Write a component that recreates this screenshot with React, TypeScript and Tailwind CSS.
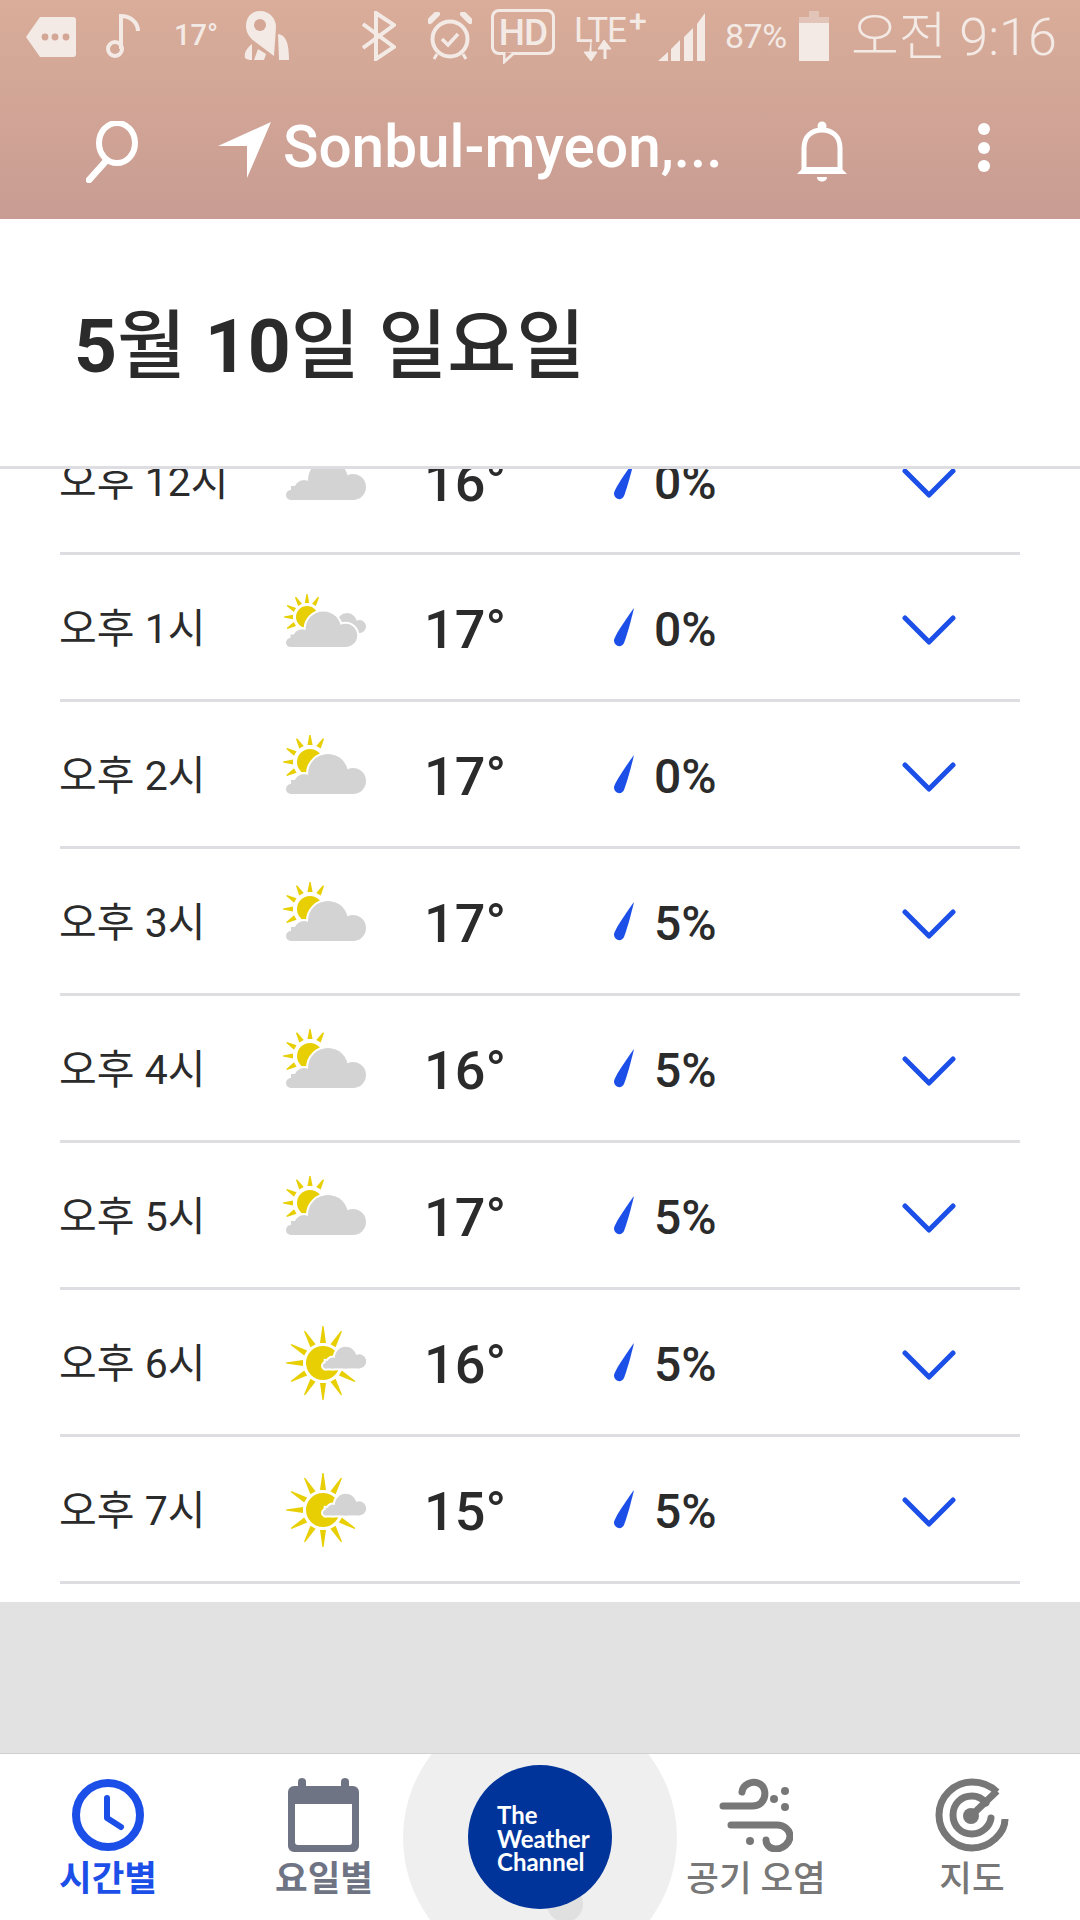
const FONT = "[font-family:Roboto,'Noto_Sans_CJK_KR',sans-serif]"

const rows = [
  { time: "12", icon: "cloud", temp: 16, rain: 0 },
  { time: "1", icon: "few", temp: 17, rain: 0 },
  { time: "2", icon: "partly", temp: 17, rain: 0 },
  { time: "3", icon: "partly", temp: 17, rain: 5 },
  { time: "4", icon: "partly", temp: 16, rain: 5 },
  { time: "5", icon: "partly", temp: 17, rain: 5 },
  { time: "6", icon: "sun", temp: 16, rain: 5 },
  { time: "7", icon: "sun", temp: 15, rain: 5 },
]

function Cloud({ x = 0, y = 0, s = 1, halo = false }: { x?: number; y?: number; s?: number; halo?: boolean }) {
  const shape = (
    <>
      <circle cx="42" cy="40" r="20" />
      <circle cx="67" cy="47" r="13" />
      <circle cx="18" cy="50" r="10" />
      <circle cx="5" cy="55" r="5" />
      <rect x="5" y="46" width="62" height="14" />
    </>
  )
  return (
    <g transform={`translate(${x} ${y}) scale(${s})`}>
      {halo && (
        <g fill="#fff" stroke="#fff" strokeWidth={4 / s}>
          {shape}
        </g>
      )}
      <g fill="#d3d3d3">{shape}</g>
    </g>
  )
}

function Rays({ cx, cy, r1, r2, w, angles }: { cx: number; cy: number; r1: number; r2: number; w: number; angles: number[] }) {
  return (
    <g fill="#e8cf04">
      {angles.map((a) => (
        <polygon
          key={a}
          transform={`translate(${cx} ${cy}) rotate(${a})`}
          points={`${r1},${-w} ${r2},-0.6 ${r2},0.6 ${r1},${w}`}
        />
      ))}
    </g>
  )
}

function WeatherIcon({ type }: { type: string }) {
  return (
    <svg width="80" height="80" viewBox="0 0 80 80" className="shrink-0 overflow-visible">
      {type === "cloud" && <Cloud />}
      {type === "partly" && (
        <>
          <circle cx="24" cy="28" r="13" fill="#e8cf04" />
          <Rays cx={24} cy={28} r1={17} r2={27} w={2.6} angles={[180, 210, 240, 270, 300, 150]} />
          <Cloud halo />
        </>
      )}
      {type === "few" && (
        <>
          <circle cx="21" cy="30" r="11" fill="#e8cf04" />
          <Rays cx={21} cy={30} r1={14} r2={23} w={2.2} angles={[180, 210, 240, 270, 300, 150]} />
          <Cloud x={40} y={16} s={0.5} />
          <Cloud y={6.6} s={0.89} halo />
        </>
      )}
      {type === "sun" && (
        <>
          <circle cx="37" cy="41" r="17" fill="#e8cf04" />
          <Rays cx={37} cy={41} r1={20} r2={37} w={3} angles={[60, 90, 120, 150, 180, 210, 240, 270, 300, 30]} />
          <Cloud x={37} y={14} s={0.54} halo />
        </>
      )}
    </svg>
  )
}

function Row({ time, icon, temp, rain }: { time: string; icon: string; temp: number; rain: number }) {
  return (
    <div className="h-[147px] shrink-0 flex items-center border-b-[3px] border-[#dedee2]">
      <div className="w-[226px] pt-[5px] -ml-[1px] mr-[1px] text-[41px] text-[#2b2b2b] whitespace-nowrap">오후 {time}시</div>
      <WeatherIcon type={icon} />
      <div className="w-[247px] pl-[58px] pr-[1px] pt-[5px] text-[54px] font-medium text-[#2b2b2b]">{temp}°</div>
      <svg width="22" height="40" viewBox="0 0 22 40" className="shrink-0">
        <path d="M21 1 C18 14 14 28 11 36 C9 41 1 40 1 33 C2 28 13 12 21 1 Z" fill="#1c4fe8" />
      </svg>
      <div className="w-[267px] pl-[19px] pt-[5px] text-[48px] font-medium text-[#2b2b2b]">{rain}%</div>
      <svg width="54" height="30" viewBox="0 0 54 30" className="shrink-0 mt-[6px]">
        <path d="M3 3 L27 27 L51 3" fill="none" stroke="#1c4fe8" strokeWidth="5" strokeLinecap="round" strokeLinejoin="round" />
      </svg>
    </div>
  )
}

function StatusBar() {
  const c = "#f3e9e5"
  return (
    <div className="h-[72px] flex items-center pl-[26px] text-[#f3e9e5]">
      <svg width="50" height="41" viewBox="0 0 50 41" className="shrink-0">
        <path d="M14 1 H47 a3 3 0 0 1 3 3 V38 a3 3 0 0 1 -3 3 H14 L0 21 Z" fill={c} />
        <circle cx="19" cy="21" r="3.4" fill="#d3a695" />
        <circle cx="29" cy="21" r="3.4" fill="#d3a695" />
        <circle cx="40" cy="21" r="3.4" fill="#d3a695" />
      </svg>
      <svg width="35" height="45" viewBox="0 0 35 45" className="ml-[29px] shrink-0">
        <circle cx="10" cy="35" r="7" fill="none" stroke={c} strokeWidth="4" />
        <path d="M16 35 V2 C26 2 33 9 33 17" fill="none" stroke={c} strokeWidth="4" />
      </svg>
      <div className="ml-[34px] w-[70px] text-[29px] font-medium">17°</div>
      <svg width="46" height="50" viewBox="0 0 46 50" className="shrink-0">
        <path d="M16 0 C26 0 32 8 32 16 L30 45 L10 30 C4 25 2 20 2 15 C2 6 8 0 16 0 Z" fill={c} />
        <circle cx="16" cy="14" r="6" fill="#d3a695" />
        <path d="M34 23 C42 24 45 32 45 49 H35 Z M8 33 C2 38 0 42 1 47 C4 49 6 49 8 49 Z M14 38 L10 49 H20 L22 43 Z" fill={c} />
      </svg>
      <svg width="34" height="50" viewBox="0 0 34 50" className="ml-[72px] shrink-0">
        <path d="M1 13 L32 36 L14 48 V2 L32 14 L1 37" fill="none" stroke={c} strokeWidth="4" />
      </svg>
      <svg width="44" height="49" viewBox="0 0 44 49" className="ml-[32px] shrink-0">
        <circle cx="22" cy="27" r="17.5" fill="none" stroke={c} strokeWidth="4" />
        <path d="M14 27 L20 33 L30 22" fill="none" stroke={c} strokeWidth="3.5" />
        <path d="M2 9 L9 2 M42 9 L35 2" stroke={c} strokeWidth="6" strokeLinecap="round" />
        <path d="M9 42 L6 47 M35 42 L38 47" stroke={c} strokeWidth="3" />
      </svg>
      <div className="relative ml-[19px] w-[64px] h-[46px] border-[3px] border-[#f3e9e5] rounded-[8px] flex items-center justify-center text-[37px] tracking-[-1px] leading-none font-medium mb-[8px]">
        HD
        <svg width="16" height="12" viewBox="0 0 16 12" className="absolute left-[9px] -bottom-[12px]">
          <path d="M1 0 V10 L11 1" fill="#d4a796" stroke={c} strokeWidth="3" />
        </svg>
      </div>
      <div className="relative ml-[19px] w-[72px] h-[53px] text-[35px] tracking-[-1px] leading-none font-normal">
        <span className="absolute left-0 top-[3px]">LTE</span>
        <span className="absolute left-[55px] -top-[5px] text-[32px] font-medium">+</span>
        <svg width="28" height="24" viewBox="0 0 28 24" className="absolute left-[10px] top-[30px]">
          <path d="M7 0 V12 H13 L7 21 L0 12 H5 M20 19 V9 H14 L20 0 L27 9 H22 V19" fill={c} stroke={c} strokeWidth="1" />
        </svg>
      </div>
      <svg width="48" height="49" viewBox="0 0 48 49" className="ml-[12px] shrink-0">
        <path d="M0 49 L10 40 V49 Z M13 37 L22 28 V49 H13 Z M26 25 L35 16 V49 H26 Z M39 12 L47 1 V49 H39 Z" fill={c} />
      </svg>
      <div className="ml-[19px] w-[74px] text-[34px] tracking-[-0.5px] whitespace-nowrap">87%</div>
      <svg width="30" height="50" viewBox="0 0 30 50" className="shrink-0">
        <path d="M10 0 H20 V6 H30 V12 H0 V6 H10 Z" fill={c} opacity="0.4" />
        <rect y="12" width="30" height="38" fill={c} />
      </svg>
      <div className="ml-[22px] pt-[4px] text-[52px] font-light whitespace-nowrap">오전 9:16</div>
    </div>
  )
}

function TopBar() {
  return (
    <div className="h-[147px] flex items-start pt-[49px] pl-[86px] text-white">
      <svg width="53" height="62" viewBox="0 0 53 62" className="shrink-0">
        <ellipse cx="31" cy="22" rx="18" ry="20" fill="none" stroke="#fff" strokeWidth="6" />
        <path d="M20 40 L3 59" stroke="#fff" strokeWidth="6.5" strokeLinecap="round" />
      </svg>
      <svg width="53" height="56" viewBox="0 0 53 56" className="ml-[79px] mt-[1px] shrink-0">
        <path d="M53 0 L0 24 H29 V56 Z" fill="#fff" />
      </svg>
      <div className="ml-[12px] w-[514px] -mt-[5px] text-[58.5px] leading-[62px] font-medium whitespace-nowrap">Sonbul-myeon,...</div>
      <svg width="50" height="62" viewBox="0 0 50 62" className="shrink-0">
        <path d="M7 50 V27 C7 15 15 9 25 9 C35 9 43 15 43 27 V50" fill="none" stroke="#fff" strokeWidth="5" />
        <circle cx="25" cy="5" r="4.5" fill="#fff" />
        <path d="M0 53 L7 46 H43 L50 53 Z" fill="#fff" />
        <path d="M20 56 H30 C30 62 20 62 20 56 Z" fill="#fff" />
      </svg>
      <div className="ml-[131px] mt-[2px] flex flex-col gap-[6.5px]">
        <div className="size-[12px] rounded-full bg-white" />
        <div className="size-[12px] rounded-full bg-white" />
        <div className="size-[12px] rounded-full bg-white" />
      </div>
    </div>
  )
}

function BottomNav() {
  return (
    <div className="relative h-[167px] bg-white border-t border-[#d0d0d0] overflow-hidden">
      {/* logo backdrop */}
      <div className="absolute left-[403px] -top-[53px] size-[274px] rounded-full bg-[#efefef]" />
      <div className="absolute left-[547px] top-[132px] size-[36px] rounded-full bg-[#e0e0e0]" />
      <div className="absolute left-[468px] top-[11px] size-[144px] rounded-full bg-[#00349b] pl-[29px] pt-[38px] text-[24px] leading-[23.5px] font-bold text-white [font-family:Lato,sans-serif]">
        The
        <br />
        Weather
        <br />
        Channel
      </div>

      <div className="relative grid grid-cols-5 h-full">
        <div className="flex flex-col items-center pt-[24px]">
          <svg width="74" height="74" viewBox="0 0 74 74">
            <circle cx="37" cy="37" r="32" fill="none" stroke="#1c4fe8" strokeWidth="8" />
            <path d="M36 20 V40 L50 49" fill="none" stroke="#1c4fe8" strokeWidth="6" strokeLinecap="round" strokeLinejoin="round" />
          </svg>
          <span className="mt-[5px] text-[35.5px] leading-[44px] font-bold text-[#1c4fe8]">시간별</span>
        </div>
        <div className="flex flex-col items-center pt-[24px]">
          <svg width="74" height="74" viewBox="0 0 74 74" fill="#6f7484">
            <rect x="11" y="0" width="8" height="16" rx="4" />
            <rect x="54" y="0" width="8" height="16" rx="4" />
            <path d="M7 8 H66 a6 6 0 0 1 6 6 V68 a6 6 0 0 1 -6 6 H7 a6 6 0 0 1 -6 -6 V14 a6 6 0 0 1 6 -6 Z M8 26 V64 a3 3 0 0 0 3 3 H62 a3 3 0 0 0 3 -3 V26 Z" fillRule="evenodd" />
          </svg>
          <span className="mt-[5px] text-[35.5px] leading-[44px] font-bold text-[#6f7484]">요일별</span>
        </div>
        <div />
        <div className="flex flex-col items-center pt-[24px]">
          <svg width="74" height="74" viewBox="0 0 74 74" fill="none" stroke="#777" strokeWidth="7" strokeLinecap="round">
            <path d="M23 14 C24 6 33 3 39 5 C47 8 48 19 42 25 C40 27 37 28 33 28 H4" />
            <path d="M12 47 H58 C65 47 71 52 71 58 C71 65 64 71 57 71 C51 71 47 67 47 62" />
            <g fill="#777" stroke="none">
              <circle cx="66" cy="13" r="4" />
              <circle cx="55" cy="21" r="4" />
              <circle cx="66" cy="29" r="4" />
              <circle cx="31" cy="63" r="4" />
            </g>
          </svg>
          <span className="mt-[5px] text-[35.5px] leading-[44px] font-medium text-[#777] whitespace-nowrap">공기 오염</span>
        </div>
        <div className="flex flex-col items-center pt-[24px]">
          <svg width="74" height="74" viewBox="0 0 74 74" fill="none" stroke="#777" strokeWidth="7" strokeLinecap="round">
            <path d="M62 14 C55 7 46 4 37 4 C19 4 4 19 4 37 C4 55 19 70 37 70 C55 70 70 55 70 41" strokeLinecap="butt" />
            <path d="M51 25 C47 20 42 18 37 18 C26 18 18 26 18 37 C18 48 26 56 37 56 C47 56 55 48 56 40" strokeLinecap="round" />
            <path d="M38 36 L62 13" strokeLinecap="butt" />
            <circle cx="36" cy="38" r="8" fill="#777" stroke="none" />
          </svg>
          <span className="mt-[5px] text-[35.5px] leading-[44px] font-medium text-[#777]">지도</span>
        </div>
      </div>
    </div>
  )
}

export default function App() {
  return (
    <div className={`w-[1080px] h-[1920px] flex flex-col bg-white overflow-hidden ${FONT}`}>
      <div className="h-[219px] shrink-0 bg-gradient-to-b from-[#d9ad99] to-[#c99c93]">
        <StatusBar />
        <TopBar />
      </div>

      {/* Date header */}
      <div className="h-[250px] shrink-0 pl-[74px] pt-[77px] border-b-[3px] border-[#dedee2] text-[75px] leading-[100px] font-medium text-[#2b2b2b] whitespace-nowrap">
        <span className="font-bold">5</span>월 <span className="font-bold">10</span>일 일요일
      </div>

      {/* Hourly list, scrolled so the first row is cut off */}
      <div className="h-[1133px] shrink-0 flex flex-col justify-end overflow-hidden px-[60px] pb-[18px]">
        {rows.map((r) => (
          <Row key={r.time} {...r} />
        ))}
      </div>

      <div className="flex-1 bg-[#e2e2e2]" />
      <BottomNav />
    </div>
  )
}
